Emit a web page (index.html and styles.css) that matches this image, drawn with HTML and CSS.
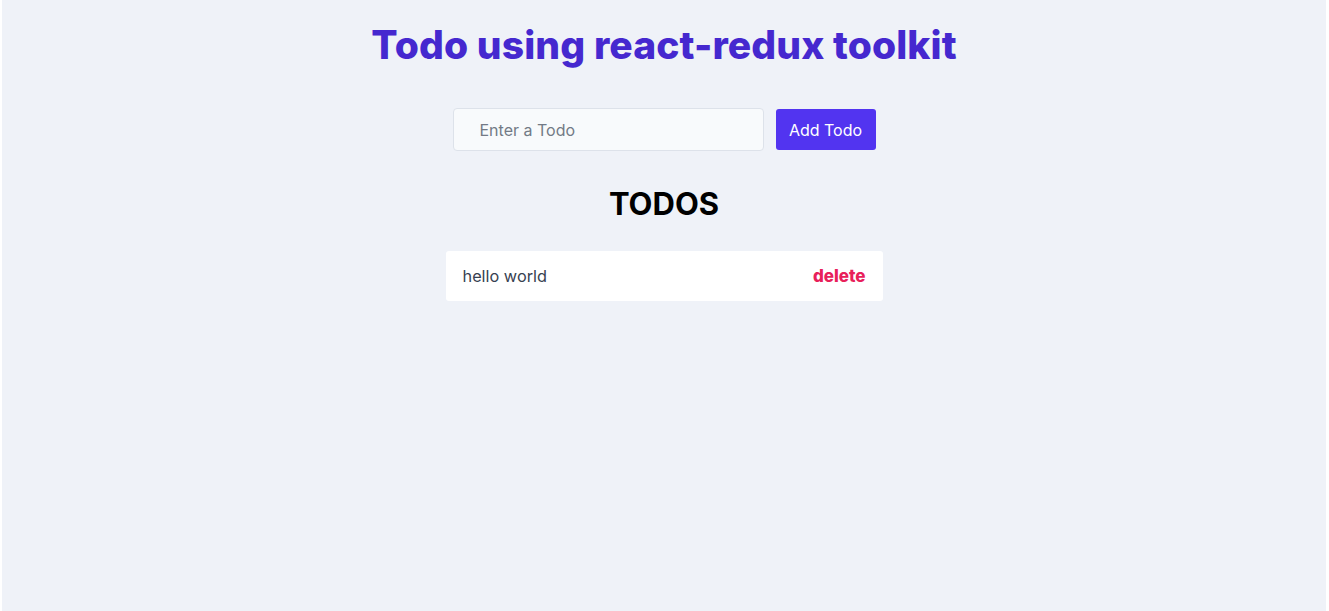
FILE: index.html
```html
<!DOCTYPE html>
<html lang="en">
<head>
<meta charset="utf-8">
<title>Todo using react-redux toolkit</title>
<link rel="stylesheet" href="styles.css">
</head>
<body>
<div class="app">
  <h1 class="title">Todo using react-redux toolkit</h1>
  <form class="add-form">
    <input class="todo-input" type="text" placeholder="Enter a Todo">
    <button class="add-btn" type="button">Add Todo</button>
  </form>
  <h2 class="list-title">TODOS</h2>
  <ul class="todo-list">
    <li class="todo-item">
      <span class="todo-text">hello world</span>
      <button class="delete-btn" type="button">delete</button>
    </li>
  </ul>
</div>
</body>
</html>
```
FILE: styles.css
```css
html, body {
  margin: 0;
  padding: 0;
  height: 100%;
  background: #ffffff;
}
body {
  font-family: Inter, "Noto Sans", sans-serif;
  padding: 0 3px 0 2px;
  box-sizing: border-box;
}
.app {
  background: #eff2f8;
  min-height: 100%;
  display: flex;
  flex-direction: column;
  align-items: center;
  padding-top: 22px;
  box-sizing: border-box;
}
.title {
  margin: 0;
  font-size: 39px;
  font-weight: 800;
  color: #4528cf;
  line-height: 46px;
  letter-spacing: 0.1px;
}
.add-form {
  display: flex;
  align-items: center;
  gap: 12px;
  margin-top: 40px;
}
.todo-input {
  width: 311px;
  height: 43px;
  box-sizing: border-box;
  border: 1px solid #dde2ea;
  border-radius: 4px;
  background: #f8fafc;
  padding: 0 26px;
  font-family: inherit;
  font-size: 16px;
  color: #374151;
  outline: none;
}
.todo-input::placeholder {
  color: #737a86;
}
.add-btn {
  width: 100px;
  height: 41px;
  border: none;
  border-radius: 3px;
  background: #5234f0;
  color: #ffffff;
  font-family: inherit;
  font-size: 16px;
  padding: 0;
}
.list-title {
  margin: 35px 0 0;
  font-size: 31px;
  font-weight: 700;
  color: #000000;
  line-height: 36px;
}
.todo-list {
  list-style: none;
  margin: 29px 0 0;
  padding: 0;
}
.todo-item {
  width: 437px;
  height: 50px;
  box-sizing: border-box;
  background: #ffffff;
  border-radius: 3px;
  display: flex;
  align-items: center;
  justify-content: space-between;
  padding: 0 17px;
}
.todo-text {
  font-size: 16.3px;
  color: #374151;
}
.delete-btn {
  border: none;
  background: none;
  padding: 0;
  font-family: inherit;
  font-size: 17px;
  font-weight: 800;
  color: #e8205a;
}
```
